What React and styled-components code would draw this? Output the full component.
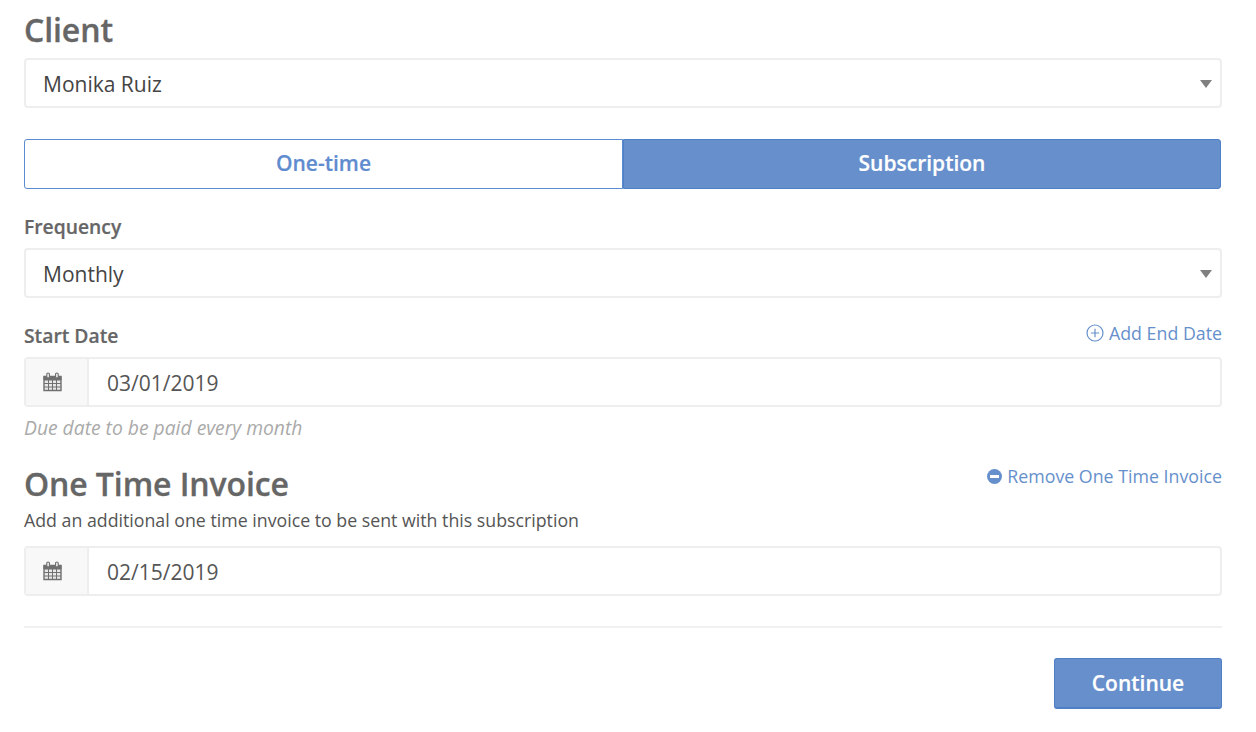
import styled, { createGlobalStyle } from "styled-components";

const Global = createGlobalStyle`
  html, body {
    margin: 0;
    background: #fff;
    font-family: "Open Sans", "Liberation Sans", sans-serif;
    color: #666;
  }
`;

const Form = styled.div`
  width: 1198px;
  padding: 9px 0 0 24px;
  display: flex;
  flex-direction: column;
`;

const Heading = styled.h2`
  margin: 0;
  font-size: 32px;
  line-height: 42px;
  font-weight: 600;
  letter-spacing: -0.1px;
  -webkit-text-stroke: 0.3px #666;
  color: #666;
`;

const Label = styled.label`
  display: block;
  font-size: 19.3px;
  line-height: 24px;
  font-weight: 600;
  -webkit-text-stroke: 0.2px #666;
  color: #666;
`;

const LabelRow = styled.div`
  display: flex;
  justify-content: space-between;
  align-items: flex-start;
  margin-top: ${(p) => p.$mt || 0}px;
`;

const TextLink = styled.a`
  display: flex;
  align-items: center;
  gap: 5px;
  margin-top: ${(p) => p.$shift || 0}px;
  font-size: 17.8px;
  line-height: 24px;
  color: #6690cc;
`;

const SelectBox = styled.div`
  box-sizing: border-box;
  height: 50px;
  margin-top: ${(p) => p.$mt || 0}px;
  padding: 1px 8px 0 17px;
  display: flex;
  align-items: center;
  justify-content: space-between;
  border: 2px solid #eee;
  border-radius: 4px;
  font-size: 21px;
  color: #444;
`;

const Caret = styled.span`
  width: 0;
  height: 0;
  margin-top: 1px;
  border-left: 6px solid transparent;
  border-right: 6px solid transparent;
  border-top: 8px solid #808080;
`;

const Toggle = styled.div`
  display: grid;
  grid-template-columns: 599px 1fr;
  height: 50px;
  margin: 31px 1px 0 0;
`;

const ToggleOption = styled.div`
  display: flex;
  align-items: center;
  justify-content: center;
  padding-bottom: 2px;
  box-sizing: border-box;
  font-size: 21px;
  font-weight: 600;
  -webkit-text-stroke: 0.2px ${(p) => (p.$active ? "#fff" : "#5f8ccf")};
  border: 1px solid ${(p) => (p.$active ? "#4f7fc4" : "#5b8bd0")};
  border-radius: ${(p) => (p.$active ? "0 3px 3px 0" : "3px 0 0 3px")};
  background: ${(p) => (p.$active ? "#668fcc" : "#fff")};
  color: ${(p) => (p.$active ? "#fff" : "#5f8ccf")};
`;

const DateBox = styled.div`
  box-sizing: border-box;
  height: 50px;
  margin-top: ${(p) => p.$mt || 0}px;
  display: flex;
  border: 2px solid #eee;
  border-radius: 4px;
  font-size: 21px;
  color: #555;
`;

const DateAddon = styled.div`
  box-sizing: border-box;
  width: 63px;
  flex: none;
  display: flex;
  align-items: center;
  padding-left: 17px;
  background: #f8f8f8;
  border-right: 2px solid #eee;
`;

const DateValue = styled.div`
  display: flex;
  align-items: center;
  padding: 1px 0 0 18px;
`;

const Help = styled.div`
  margin-top: 9px;
  font-size: 19.3px;
  line-height: 24px;
  font-style: italic;
  color: #aaa;
`;

const SubText = styled.div`
  margin-top: 4px;
  font-size: 17.75px;
  line-height: 22px;
  color: #555;
`;

const Divider = styled.hr`
  width: 100%;
  margin: 30px 0;
  border: 0;
  border-top: 2px solid #f1f1f1;
`;

const Actions = styled.div`
  display: flex;
  justify-content: flex-end;
`;

const Button = styled.button`
  width: 168px;
  height: 51px;
  border: 1px solid #4f7fc4;
  border-bottom-width: 2px;
  border-radius: 3px;
  background: #668fcc;
  color: #fff;
  font-family: inherit;
  font-size: 21px;
  font-weight: 600;
  -webkit-text-stroke: 0.2px #fff;
`;

const CalendarIcon = () => (
  <svg width="19" height="20" viewBox="0 0 19 20" fill="none" stroke="#707070">
    <path d="M1 4.5h17v14H1z" fill="#e8e8e8" strokeWidth="1.4" />
    <path d="M1 4.5h17v3.5H1z" fill="#707070" strokeWidth="1" />
    <path d="M5.5 8v10M9.5 8v10M13.5 8v10M1 11.5h17M1 15h17" strokeWidth="1" />
    <rect x="3.8" y="1" width="2.6" height="5" rx="1.3" fill="#fff" strokeWidth="1.2" />
    <rect x="12.6" y="1" width="2.6" height="5" rx="1.3" fill="#fff" strokeWidth="1.2" />
  </svg>
);

const PlusCircle = () => (
  <svg width="18" height="18" viewBox="0 0 18 18" fill="none" stroke="#6690cc" strokeWidth="1.2">
    <circle cx="9" cy="9" r="8" />
    <path d="M9 4.8v8.4M4.8 9h8.4" />
  </svg>
);

const MinusCircle = () => (
  <svg width="15" height="15" viewBox="0 0 15 15">
    <circle cx="7.5" cy="7.5" r="7.5" fill="#6690cc" />
    <rect x="3" y="6" width="9" height="3" fill="#fff" />
  </svg>
);

export default function App() {
  return (
    <>
      <Global />
      <Form>
        <Heading>Client</Heading>
        <SelectBox $mt={7}>
          Monika Ruiz
          <Caret />
        </SelectBox>

        <Toggle>
          <ToggleOption>One-time</ToggleOption>
          <ToggleOption $active>Subscription</ToggleOption>
        </Toggle>

        <LabelRow $mt={26}>
          <Label>Frequency</Label>
        </LabelRow>
        <SelectBox $mt={9}>
          Monthly
          <Caret />
        </SelectBox>

        <LabelRow $mt={26}>
          <Label>Start Date</Label>
          <TextLink $shift={-3}>
            <PlusCircle />
            Add End Date
          </TextLink>
        </LabelRow>
        <DateBox $mt={9}>
          <DateAddon>
            <CalendarIcon />
          </DateAddon>
          <DateValue>03/01/2019</DateValue>
        </DateBox>
        <Help>Due date to be paid every month</Help>

        <LabelRow $mt={23}>
          <Heading>One Time Invoice</Heading>
          <TextLink $shift={1}>
            <MinusCircle />
            Remove One Time Invoice
          </TextLink>
        </LabelRow>
        <SubText>Add an additional one time invoice to be sent with this subscription</SubText>
        <DateBox $mt={15}>
          <DateAddon>
            <CalendarIcon />
          </DateAddon>
          <DateValue>02/15/2019</DateValue>
        </DateBox>

        <Divider />

        <Actions>
          <Button>Continue</Button>
        </Actions>
      </Form>
    </>
  );
}
